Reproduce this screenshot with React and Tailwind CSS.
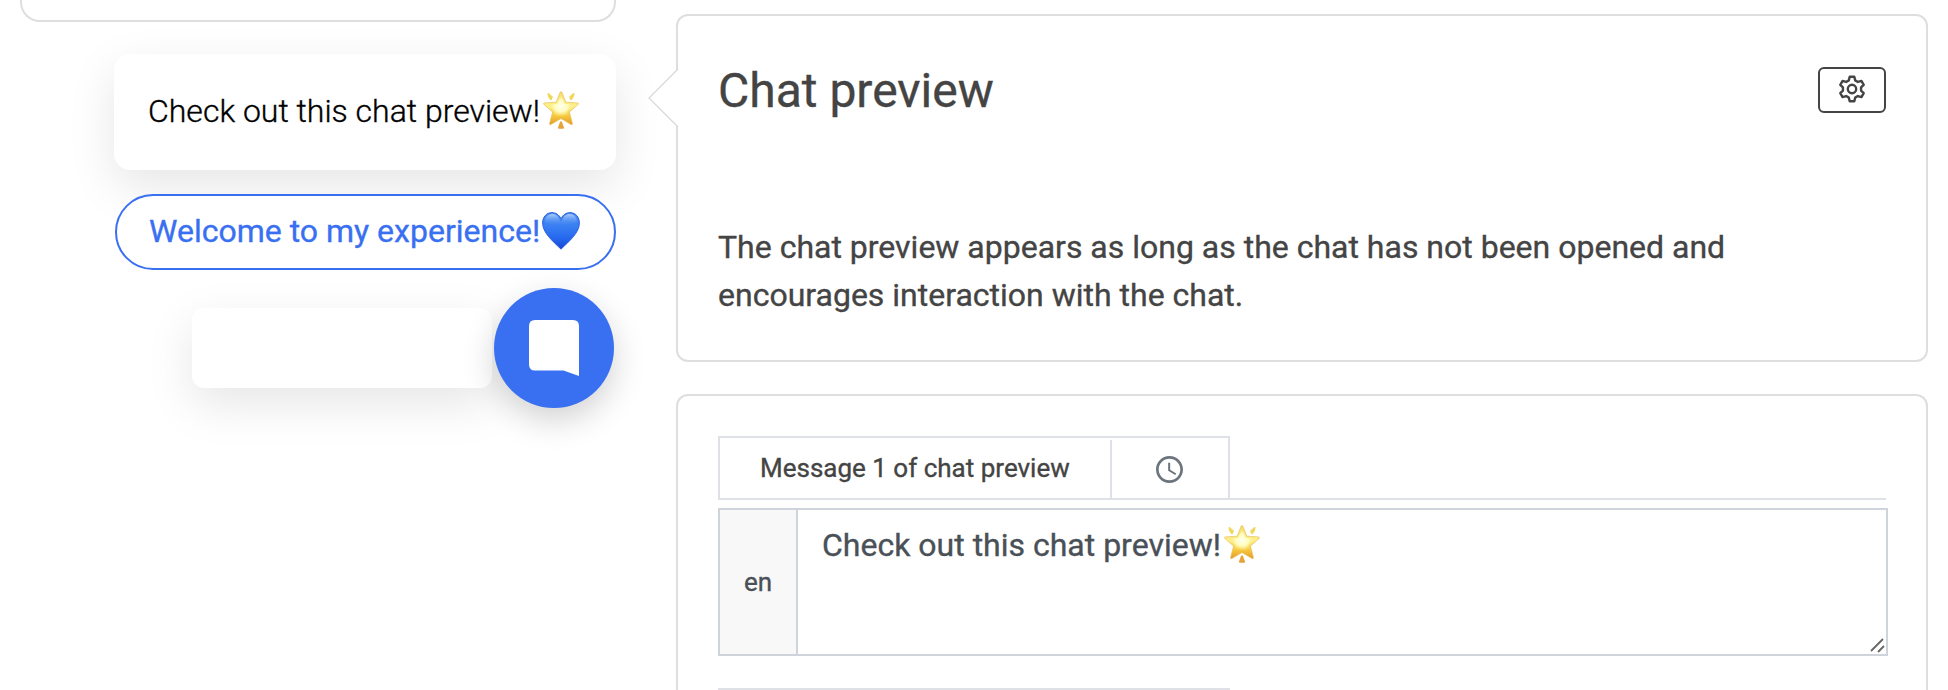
import React from "react";

function GlowingStar({ className }) {
  return (
    <svg viewBox="0 0 36 38" className={className} aria-hidden="true">
      <defs>
        <linearGradient id="starBody" x1="0" y1="0" x2="0" y2="1">
          <stop offset="0" stopColor="#f3dc6a" />
          <stop offset="0.45" stopColor="#fdf08a" />
          <stop offset="0.75" stopColor="#f5c63c" />
          <stop offset="1" stopColor="#e39a2c" />
        </linearGradient>
        <radialGradient id="starShine" cx="0.5" cy="0.42" r="0.42">
          <stop offset="0" stopColor="#ffffea" />
          <stop offset="0.55" stopColor="#fffcc0" />
          <stop offset="1" stopColor="#fdf08a" stopOpacity="0" />
        </radialGradient>
      </defs>
      <path d="M4.4 2.6 Q4.8 1.4 5.9 2.2 L9.6 5.4 Q10 5.9 9.7 6.6 L8.6 9 Q8 9.6 7.3 9 Q4.6 6.5 4.4 2.6Z" fill="#efd75a" />
      <path d="M31.6 2.6 Q31.2 1.4 30.1 2.2 L26.4 5.4 Q26 5.9 26.3 6.6 L27.4 9 Q28 9.6 28.7 9 Q31.4 6.5 31.6 2.6Z" fill="#efd75a" />
      <path d="M17.1 30.8 Q18 29.8 18.9 30.8 L21 36.4 Q21.1 37.6 20 37.7 H16 Q14.9 37.6 15 36.4Z" fill="#e5a438" />
      <path
        d="M17.2 1.1 Q18 .1 18.8 1.1 L22.8 11.2 L34.7 11.9 Q36.1 12.3 35.2 13.4 L26.4 21 L29.4 32.5 Q29.5 34 28.2 33.6 L18 27.6 L7.8 33.6 Q6.5 34 6.6 32.5 L9.6 21 L.8 13.4 Q-.1 12.3 1.3 11.9 L13.2 11.2Z"
        fill="url(#starBody)"
        stroke="#e6b84a"
        strokeWidth=".6"
      />
      <path d="M18 4 L21.8 13 L32 13.6 L24.4 20.6 L26.8 30 L18 25 L9.2 30 L11.6 20.6 L4 13.6 L14.2 13Z" fill="url(#starShine)" />
    </svg>
  );
}

function BlueHeart({ className }) {
  return (
    <svg viewBox="0 0 38 38" className={className} aria-hidden="true">
      <defs>
        <linearGradient id="heartBody" x1="0" y1="0" x2="0" y2="1">
          <stop offset="0" stopColor="#4b8af0" />
          <stop offset="0.35" stopColor="#3b80f2" />
          <stop offset="0.7" stopColor="#2568ee" />
          <stop offset="1" stopColor="#1746d8" />
        </linearGradient>
        <linearGradient id="heartShine" x1="0" y1="0" x2="0" y2="1">
          <stop offset="0" stopColor="#b9d8fb" stopOpacity=".85" />
          <stop offset="1" stopColor="#5a9af5" stopOpacity="0" />
        </linearGradient>
      </defs>
      <path
        d="M19 6.6 C17 2.6 13.6 .6 10.1 .6 C4.4 .6 .6 5 .6 11 C.6 20.6 10.4 28.8 19 37.2 C27.6 28.8 37.4 20.6 37.4 11 C37.4 5 33.6 .6 27.9 .6 C24.4 .6 21 2.6 19 6.6Z"
        fill="url(#heartBody)"
        stroke="#2158dc"
        strokeWidth=".9"
      />
      <path d="M3 10 C3 4.8 6.4 2 10.2 2 C14 2 16.6 4.4 17.8 8.4 C18.4 10.2 19.6 10.2 20.2 8.4 C21.4 4.4 24 2 27.8 2 C31.6 2 35 4.8 35 10 C30 14 8 14 3 10Z" fill="url(#heartShine)" />
    </svg>
  );
}

function GearIcon() {
  return (
    <svg viewBox="-14 -14 28 28" className="size-7" fill="none" stroke="#444444" strokeWidth="2.4" strokeLinejoin="round" aria-hidden="true">
      <path d="M-3.2 -8.6 L-2.3 -12.2 H2.3 L3.2 -8.6 L5.85 -7.07 L9.42 -8.09 L11.72 -4.11 L9.05 -1.53 V1.53 L11.72 4.11 L9.42 8.09 L5.85 7.07 L3.2 8.6 L2.3 12.2 H-2.3 L-3.2 8.6 L-5.85 7.07 L-9.42 8.09 L-11.72 4.11 L-9.05 1.53 V-1.53 L-11.72 -4.11 L-9.42 -8.09 L-5.85 -7.07Z" />
      <circle r="4.2" />
    </svg>
  );
}

function ClockIcon() {
  return (
    <svg viewBox="2 2 20 20" className="size-[27px]" fill="#6c757d" aria-hidden="true">
      <path d="M11.99 2C6.47 2 2 6.48 2 12s4.47 10 9.99 10C17.52 22 22 17.52 22 12S17.52 2 11.99 2zM12 20c-4.42 0-8-3.58-8-8s3.58-8 8-8 8 3.58 8 8-3.58 8-8 8zm.5-13H11v6l5.25 3.15.75-1.23-4.5-2.67z" />
    </svg>
  );
}

function ChatWidget() {
  return (
    <aside className="flex w-[616px] shrink-0 flex-col items-end pl-5">
      <div className="h-[22px] w-full shrink-0 rounded-b-[20px] border-2 border-t-0 border-[#dedede]" />
      <div className="mt-8 flex h-[116px] w-[502px] shrink-0 items-center rounded-2xl bg-white pl-[34px] shadow-[0_16px_48px_rgba(0,0,0,0.1)]">
        <span className="w-[394px] pb-0.5 whitespace-nowrap text-[32px] leading-10 font-light text-black">Check out this chat preview!</span>
        <GlowingStar className="mt-[-4px] ml-[1px] h-[38px] w-9" />
      </div>
      <button className="mt-6 flex h-[76px] w-[501px] shrink-0 items-center rounded-full border-2 border-[#3970f2] bg-white pl-8 text-left">
        <span className="w-[393px] pb-0.5 whitespace-nowrap text-[32px] leading-10 text-[#3970f2]">Welcome to my experience!</span>
        <BlueHeart className="mb-[3px] h-[38px] w-[38px]" />
      </button>
      <div className="mt-[18px] flex shrink-0 items-center gap-0.5 pr-0.5">
        <div className="h-20 w-[300px] rounded-xl bg-white shadow-[0_16px_48px_rgba(0,0,0,0.1)]" />
        <button className="flex size-[120px] items-center justify-center rounded-full bg-[#3970f2] shadow-[0_12px_32px_rgba(0,0,0,0.18)]">
          <svg viewBox="0 0 50 56" className="h-14 w-[50px]" fill="#ffffff" aria-hidden="true">
            <path d="M6 0H44Q50 0 50 6V56L34.5 50.4H6Q0 50.4 0 44.4V6Q0 0 6 0Z" />
          </svg>
        </button>
      </div>
    </aside>
  );
}

function IntroPanel() {
  return (
    <section className="relative h-[348px] shrink-0 rounded-xl border-2 border-[#dedede] bg-white pt-[51px] pr-10 pl-10">
      <svg viewBox="0 0 32 62" className="absolute top-[51px] left-[-30px] h-[62px] w-8" aria-hidden="true">
        <path d="M30 2 L1 31 L30 60 H32 V2Z" fill="#ffffff" />
        <path d="M30 2 L1 31 L30 60" fill="none" stroke="#d8d8d8" strokeWidth="1.2" />
      </svg>
      <header className="flex items-start justify-between">
        <h1 className="mt-[-4px] text-[48px] leading-[56px]">Chat preview</h1>
        <button className="flex h-[46px] w-[68px] items-center justify-center rounded-md border-2 border-[#444444] pb-[2px]">
          <GearIcon />
        </button>
      </header>
      <p className="mt-[104px] w-[1060px] text-[32px] leading-[48px]">
        The chat preview appears as long as the chat has not been opened and
        <br />
        encourages interaction with the chat.
      </p>
    </section>
  );
}

function MessagePanel() {
  return (
    <section className="mt-8 h-[320px] shrink-0 overflow-hidden rounded-t-xl border-2 border-b-0 border-[#dedede] bg-white pt-10 pr-[38px] pl-10">
      <div className="mr-0.5 flex h-16 border-b-2 border-[#dee2e6]">
        <div className="flex h-[62px] w-[512px] border-2 border-b-0 border-[#dee2e6]">
          <span className="flex w-[390px] items-center pt-[1px] pl-10 text-[26px] whitespace-nowrap">Message 1 of chat preview</span>
          <span className="mt-0.5 flex flex-1 items-center justify-center border-l-2 border-[#dee2e6] pt-[1px] pr-[1px]">
            <ClockIcon />
          </span>
        </div>
      </div>
      <div className="mt-2 flex h-[148px] border-2 border-[#ced4da] text-[#495057]">
        <span className="flex w-[78px] items-center justify-center border-r-2 border-[#ced4da] bg-[#f8f8f9] text-[26px]">en</span>
        <div className="flex flex-1 items-start pt-[11px] pl-6">
          <span className="w-[402px] text-[32px] leading-[48px] whitespace-nowrap">Check out this chat preview!</span>
          <GlowingStar className="mt-[4px] h-[38px] w-9" />
          <svg viewBox="0 0 16 16" className="mr-[1px] mb-[1px] ml-auto size-4 self-end" fill="none" stroke="#666666" strokeWidth="1.8" aria-hidden="true">
            <path d="M2 14 L14 2 M9 15 L15 9" />
          </svg>
        </div>
      </div>
      <div className="mt-8 h-16 w-[512px] border-2 border-[#dee2e6]" />
    </section>
  );
}

export default function App() {
  return (
    <div className="flex h-[690px] w-[1948px] overflow-hidden bg-white font-[Roboto,sans-serif] text-[#444444] [-webkit-text-stroke:0.35px]">
      <ChatWidget />
      <main className="ml-[60px] flex w-[1252px] flex-col pt-3.5">
        <IntroPanel />
        <MessagePanel />
      </main>
    </div>
  );
}
